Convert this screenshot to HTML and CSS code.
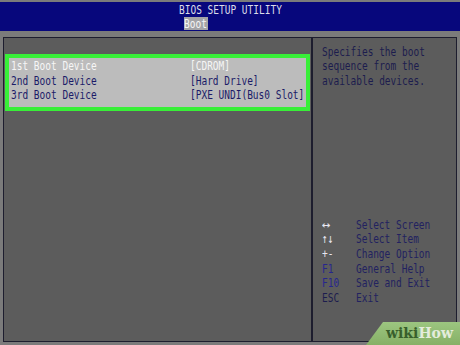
FILE: index.html
```html
<!DOCTYPE html>
<html>
<head>
<meta charset="utf-8">
<link rel="stylesheet" href="styles.css">
</head>
<body>
<div class="screen">
  <header class="header">
    <div class="title"><span class="t">BIOS SETUP UTILITY</span></div>
    <div class="tabs"><div class="tab"><span class="t">Boot</span></div></div>
  </header>
  <main class="box">
    <section class="left">
      <div class="select">
        <div class="row sel"><span class="name"><span class="t">1st Boot Device</span></span><span class="t">[CDROM]</span></div>
        <div class="row"><span class="name"><span class="t">2nd Boot Device</span></span><span class="t">[Hard Drive]</span></div>
        <div class="row"><span class="name"><span class="t">3rd Boot Device</span></span><span class="t">[PXE UNDI(Bus0 Slot]</span></div>
      </div>
    </section>
    <aside class="right">
      <div class="help">
        <div class="line"><span class="t">Specifies the boot</span></div>
        <div class="line"><span class="t">sequence from the</span></div>
        <div class="line"><span class="t">available devices.</span></div>
      </div>
      <div class="keys">
        <div class="krow"><span class="key light"><span class="t arrow">↔</span></span><span class="desc"><span class="t">Select Screen</span></span></div>
        <div class="krow"><span class="key light"><span class="t">↑↓</span></span><span class="desc"><span class="t">Select Item</span></span></div>
        <div class="krow"><span class="key light"><span class="t">+-</span></span><span class="desc"><span class="t">Change Option</span></span></div>
        <div class="krow"><span class="key blue"><span class="t">F1</span></span><span class="desc"><span class="t">General Help</span></span></div>
        <div class="krow"><span class="key blue"><span class="t">F10</span></span><span class="desc"><span class="t">Save and Exit</span></span></div>
        <div class="krow"><span class="key"><span class="t">ESC</span></span><span class="desc"><span class="t">Exit</span></span></div>
      </div>
    </aside>
  </main>
  <div class="badge"><span class="wiki">wiki</span><span class="how">How</span></div>
</div>
</body>
</html>
```
FILE: styles.css
```css
html, body {
  margin: 0;
  padding: 0;
}
body {
  background: #7b7b7b;
  width: 460px;
  height: 345px;
  overflow: hidden;
  font-family: "DejaVu Sans Mono", monospace;
  font-size: 13px;
}
.screen {
  position: relative;
  width: 460px;
  height: 345px;
  padding-top: 2px;
  box-sizing: border-box;
}
.t {
  display: inline-block;
  white-space: pre;
  transform: scaleX(0.73);
  transform-origin: 0 50%;
}
.t.arrow {
  transform: scaleX(1.1);
}
.header {
  height: 29px;
  background: #07077c;
  box-sizing: border-box;
  padding-top: 1px;
}
.title {
  display: flex;
  justify-content: center;
  line-height: 13px;
  height: 13px;
  color: #dcdce8;
}
.title .t {
  transform-origin: 50% 50%;
}
.tabs {
  margin-top: 1px;
  padding-left: 184px;
}
.tab {
  width: 24px;
  height: 13px;
  line-height: 13px;
  background: #a4a4a8;
  color: #f6f6f6;
  overflow: visible;
}
.box {
  margin: 6px 0 0 3px;
  width: 454px;
  height: 305px;
  box-sizing: border-box;
  border: 1px solid #1d1d2e;
  background: #5c5c5c;
  display: flex;
}
.left {
  width: 309px;
  border-right: 2px solid #1d1d2e;
  padding: 16px 0 0 1px;
  box-sizing: border-box;
  flex: none;
}
.select {
  width: 305px;
  border: 4px solid #38ef38;
  background: #bcbcbc;
  box-sizing: border-box;
  padding: 1px 0 4px 2px;
}
.row {
  display: flex;
  height: 14.5px;
  line-height: 14.5px;
  color: #1b1b68;
}
.row.sel {
  color: #f6f6f6;
}
.name {
  width: 179px;
  flex: none;
}
.right {
  flex: 1;
  padding: 7px 0 0 9px;
  color: #1c1c4e;
}
.line {
  height: 14.3px;
  line-height: 14.3px;
}
.keys {
  margin-top: 130px;
}
.krow {
  display: flex;
  height: 14.6px;
  line-height: 14.6px;
  color: #222260;
}
.key {
  width: 34px;
  flex: none;
  color: #1c1c4e;
}
.key.light {
  color: #e6e6f0;
}
.key.blue {
  color: #26268e;
}
.badge {
  position: absolute;
  right: 0;
  bottom: 0;
  width: 94px;
  height: 23px;
  background: linear-gradient(#9cc680, #86b066);
  clip-path: polygon(17px 0, 100% 0, 100% 100%, 0 100%);
  box-sizing: border-box;
  padding-left: 20px;
  font-family: "DejaVu Serif", serif;
  font-weight: bold;
  font-size: 14px;
  line-height: 23px;
  white-space: nowrap;
}
.wiki {
  color: #385f2c;
}
.how {
  color: #e4ecdc;
}
```
